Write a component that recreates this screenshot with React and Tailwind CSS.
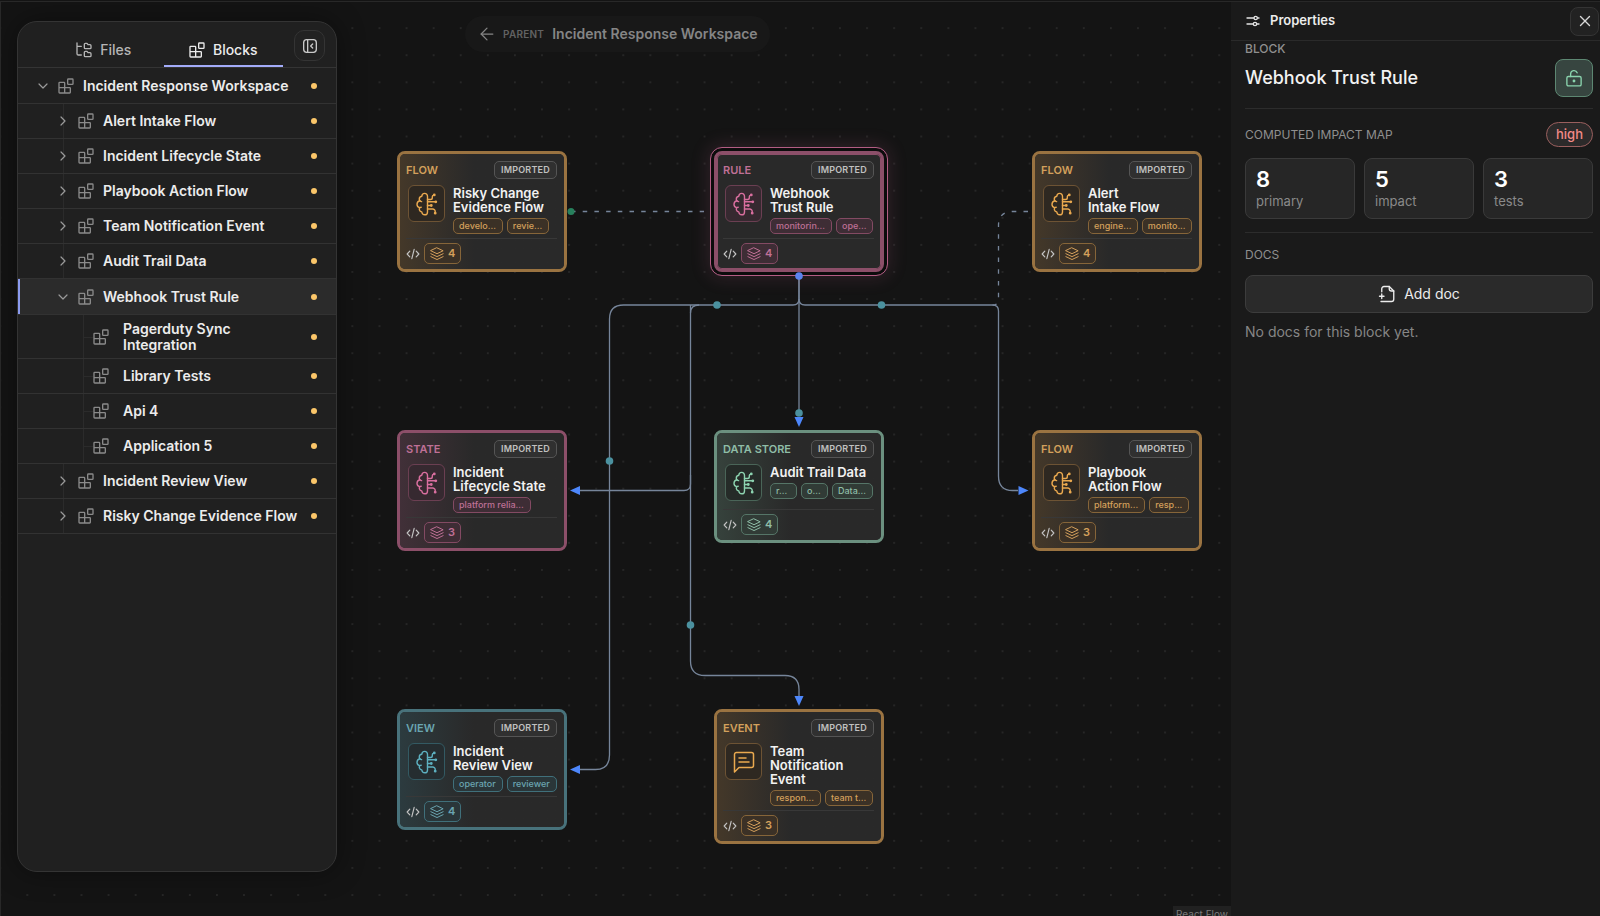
import React, { useState } from 'react';
import { ArrowLeft, ChevronDown, ChevronRight, X } from 'lucide-react';

const TONES = {
    amber: {
        frame: 'border-[#9a7341]',
        tint: 'from-[#443829]',
        label: 'text-[#d3a05c]',
        icon: 'text-[#eaa94f]',
        box: 'border-[#6d5334] bg-[#2e2821]',
        chip: 'border-[#866539] bg-[#3b3126] text-[#d3a05c]',
    },
    rose: {
        frame: 'border-[#8c4f69]',
        tint: 'from-[#413038]',
        label: 'text-[#bf7096]',
        icon: 'text-[#d96f9f]',
        box: 'border-[#6b3f52] bg-[#362930]',
        chip: 'border-[#834a63] bg-[#3e2d35] text-[#bf7096]',
    },
    green: {
        frame: 'border-[#6b907f]',
        tint: 'from-[#36423c]',
        label: 'text-[#8fbda7]',
        icon: 'text-[#8dd3b0]',
        box: 'border-[#4a6558] bg-[#252b28]',
        chip: 'border-[#557567] bg-[#313b36] text-[#8fbda7]',
    },
    teal: {
        frame: 'border-[#48727b]',
        tint: 'from-[#2c3b3f]',
        label: 'text-[#6aa5b1]',
        icon: 'text-[#5db0c0]',
        box: 'border-[#335a63] bg-[#252d30]',
        chip: 'border-[#40707b] bg-[#2a3639] text-[#6aa5b1]',
    },
};

const NODES = [
    { id: 'risky', kind: 'FLOW', tone: 'amber', title: ['Risky Change', 'Evidence Flow'], tags: ['develo...', 'revie...'], count: 4, pos: 'left-[397px] top-[151px]' },
    { id: 'webhook', kind: 'RULE', tone: 'rose', title: ['Webhook', 'Trust Rule'], tags: ['monitorin...', 'ope...'], count: 4, pos: 'left-[714px] top-[151px]', selected: true },
    { id: 'alert', kind: 'FLOW', tone: 'amber', title: ['Alert', 'Intake Flow'], tags: ['engine...', 'monito...'], count: 4, pos: 'left-[1032px] top-[151px]' },
    { id: 'lifecycle', kind: 'STATE', tone: 'rose', title: ['Incident', 'Lifecycle State'], tags: ['platform relia...'], count: 3, pos: 'left-[397px] top-[430px]' },
    { id: 'audit', kind: 'DATA STORE', tone: 'green', title: ['Audit Trail Data'], tags: ['r...', 'o...', 'Data...'], count: 4, pos: 'left-[714px] top-[430px]' },
    { id: 'playbook', kind: 'FLOW', tone: 'amber', title: ['Playbook', 'Action Flow'], tags: ['platform...', 'resp...'], count: 3, pos: 'left-[1032px] top-[430px]' },
    { id: 'review', kind: 'VIEW', tone: 'teal', title: ['Incident', 'Review View'], tags: ['operator', 'reviewer'], count: 4, pos: 'left-[397px] top-[709px]' },
    { id: 'notify', kind: 'EVENT', tone: 'amber', title: ['Team', 'Notification', 'Event'], tags: ['respon...', 'team t...'], count: 3, pos: 'left-[714px] top-[709px]', message: true },
];

const TREE = [
    { name: 'Incident Response Workspace', depth: 0, open: true },
    { name: 'Alert Intake Flow', depth: 1 },
    { name: 'Incident Lifecycle State', depth: 1 },
    { name: 'Playbook Action Flow', depth: 1 },
    { name: 'Team Notification Event', depth: 1 },
    { name: 'Audit Trail Data', depth: 1 },
    { name: 'Webhook Trust Rule', depth: 1, open: true },
    { name: 'Pagerduty Sync Integration', depth: 2, tall: true },
    { name: 'Library Tests', depth: 2 },
    { name: 'Api 4', depth: 2 },
    { name: 'Application 5', depth: 2 },
    { name: 'Incident Review View', depth: 1 },
    { name: 'Risky Change Evidence Flow', depth: 1 },
];

const STATS = [
    { value: 8, label: 'primary' },
    { value: 5, label: 'impact' },
    { value: 3, label: 'tests' },
];

function Svg({ className, stroke = 1.5, children }) {
    return (
        <svg viewBox="0 0 24 24" fill="none" stroke="currentColor" strokeWidth={stroke} strokeLinecap="round" strokeLinejoin="round" className={className} aria-hidden="true">
            {children}
        </svg>
    );
}

const BlocksIcon = ({ className }) => (
    <Svg className={className} stroke={2}>
        <path d="M10 22.500V7.500a1 1 0 0 0-1-1H2.500a1 1 0 0 0-1 1v14a1 1 0 0 0 1 1h15a1 1 0 0 0 1-1v-6a1 1 0 0 0-1-1h-16" />
        <rect x="14.500" y="1.500" width="8" height="8" rx="1" />
    </Svg>
);

const TreeIcon = ({ className }) => (
    <Svg className={className} stroke={2}>
        <path d="M1.500 1.500v16a2 2 0 0 0 2 2h4.500M1.500 6.500H8" />
        <path d="M12.500 3.500v5a1.500 1.500 0 0 0 1.500 1.500h7a1.500 1.500 0 0 0 1.500-1.500V5.500A1.500 1.500 0 0 0 21 4h-3l-1.500-2H14a1.500 1.500 0 0 0-1.500 1.500Z" />
        <path d="M12.500 15.500v5A1.500 1.500 0 0 0 14 22h7a1.500 1.500 0 0 0 1.500-1.500v-3A1.500 1.500 0 0 0 21 16h-3l-1.500-2H14a1.500 1.500 0 0 0-1.500 1.500Z" />
    </Svg>
);

const BrainIcon = () => (
    <Svg className="size-6" stroke={1.4}>
        <path d="M12.500 4.500C12.500 2.600 11.300 1.400 9.700 1.400 8 1.400 6.900 2.600 6.800 4.300 5.100 4.500 4.200 5.700 4.300 7.300c.1.600.3 1 .6 1.400C3.100 9.100 2 10.400 2 12.200c0 1.700 1 3 2.600 3.500-.3.700-.4 1.400-.2 2.200.3 1.300 1.200 2 2.400 2.100.2 1.700 1.400 2.800 3 2.800 1.500 0 2.700-1.200 2.700-2.900Z" />
        <path d="M4.900 8.700c.5.500 1 .8 1.700.9M4.600 15.700c.5-.3 1-.4 1.600-.4" />
        <path d="M12.500 7.500h3a1.800 1.800 0 0 0 1.800-1.800v-.9a1.600 1.600 0 0 1 1.400-1.600M12.500 9.800h7.500M12.500 13.500h3M12.500 17h5.200a2.500 2.500 0 0 1 2.500 2.500v1" />
        <g fill="currentColor">
            <circle cx="19.300" cy="2.900" r="0.700" />
            <circle cx="20.800" cy="9.800" r="0.700" />
            <circle cx="16.300" cy="13.500" r="0.700" />
            <circle cx="20.200" cy="21.200" r="0.700" />
        </g>
    </Svg>
);

const MessageIcon = () => (
    <Svg className="size-6">
        <path d="M2.500 22V4.500a2 2 0 0 1 2-2h15a2 2 0 0 1 2 2v11a2 2 0 0 1-2 2H7Z" />
        <path d="M7 8h7M7 12h10" />
    </Svg>
);

const LayersIcon = () => (
    <Svg className="size-3.5" stroke={1.7}>
        <path d="M12 1.500 22.500 6.500 12 11.500 1.500 6.500Z" />
        <path d="m1.500 11.500 10.500 5 10.500-5" />
        <path d="m1.500 16.500 10.500 5 10.500-5" />
    </Svg>
);

const CodeIcon = () => (
    <Svg className="size-3.5 text-[#c4c4c4]" stroke={2}>
        <path d="M6.500 7 2 12l4.500 5M17.500 7l4.500 5-4.500 5M14 4l-4 16" />
    </Svg>
);

function BlockNode({ node }) {
    const tone = TONES[node.tone];
    return (
        <article className={`absolute w-[170px] rounded-lg border-3 bg-[#292929] ${tone.frame} ${node.pos} ${node.selected ? 'outline outline-offset-3 outline-[#b35d84] shadow-[inset_0_0_0_1px_#8c4f69,0_0_0_3px_#0c0c0c,0_0_18px_6px_rgba(179,93,132,0.18)]' : ''}`}>
            <div className={`rounded-[5px] pt-[7px] pr-[7px] pb-[5px] pl-1.5 ${node.selected ? '' : `bg-linear-to-r ${tone.tint} to-[#292929] to-45%`}`}>
                <header className="flex h-[18px] items-center justify-between">
                    <span className={`text-[11px] font-semibold ${tone.label}`}>{node.kind}</span>
                    <span className="flex h-[18px] items-center rounded-[5px] border border-[#555] bg-[#303030] px-1.5 text-[9px] font-semibold tracking-wide text-[#c0c0c0]">IMPORTED</span>
                </header>
                <div className="mt-1.5 flex min-h-[41px] gap-2 pl-0.5">
                    <div className={`flex size-[37px] shrink-0 items-center justify-center rounded-md border ${tone.box} ${tone.icon}`}>
                        {node.message ? <MessageIcon /> : <BrainIcon />}
                    </div>
                    <div className="min-w-0">
                        <h3 className="mt-px whitespace-nowrap text-[13px] leading-[14px] font-semibold text-[#f2f2f2]">
                            {node.title.map((line) => <span key={line} className="block">{line}</span>)}
                        </h3>
                        <div className="mt-1 flex gap-1">
                            {node.tags.map((tag) => (
                                <span key={tag} className={`flex h-4 min-w-[27px] items-center whitespace-nowrap rounded-[5px] border pr-1.5 pl-[5px] text-[9px] font-medium ${tone.chip}`}>{tag}</span>
                            ))}
                        </div>
                    </div>
                </div>
                <footer className="mt-1 flex items-center gap-1 border-t border-[#383838] pt-1">
                    <CodeIcon />
                    <span className={`flex h-[21px] items-center gap-1 rounded-[5px] border px-[5px] text-[11px] font-semibold ${tone.chip}`}>
                        <LayersIcon />
                        {node.count}
                    </span>
                </footer>
            </div>
        </article>
    );
}

function Edges() {
    return (
        <svg className="absolute inset-0 size-full" aria-hidden="true">
            <defs>
                <pattern id="dots" x="-13.300" y="14.600" width="27.090" height="27.090" patternUnits="userSpaceOnUse">
                    <circle cx="13.500" cy="13.500" r="0.750" fill="#3e3e3e" />
                </pattern>
            </defs>
            <rect width="100%" height="100%" fill="url(#dots)" />
            <g fill="none" stroke="#76859a" strokeWidth="1.300">
                <path d="M799 276V416" />
                <path d="M799 276V299Q799 305 793 305H623.500Q609.500 305 609.500 319V755Q609.500 769.500 595.500 769.500H580" />
                <path d="M799 299Q799 305 805 305H992.500Q998.500 305 998.500 311V476Q998.500 490.500 1012.500 490.500H1018" />
                <path d="M699 305Q690.500 305 690.500 313V661Q690.500 675.500 705 675.500H785Q799 675.500 799 689.500V697" />
                <path d="M690.500 305V313" />
                <path d="M690.500 475V484Q690.500 490.500 684 490.500H580" />
                <path d="M571 211.500H704" strokeDasharray="4.500 7.200" />
                <path d="M1028 211.500H1012.500Q998.500 211.500 998.500 225.500V299Q998.500 305 992.500 305" strokeDasharray="4.500 7.200" />
            </g>
            <g fill="#4d87fb">
                <path d="M570 490.500 580 486v9Z" />
                <path d="M570 769.500 580 765v9Z" />
                <path d="M1028.500 490.500 1018.500 486v9Z" />
                <path d="M799 427 794.500 417h9Z" />
                <path d="M799 706 794.500 696h9Z" />
            </g>
            <g fill="#4b919f">
                <circle cx="717" cy="305" r="3.800" />
                <circle cx="881.500" cy="305" r="3.800" />
                <circle cx="799" cy="413" r="3.800" />
                <circle cx="609.500" cy="461" r="3.800" />
                <circle cx="690.500" cy="625" r="3.800" />
            </g>
            <circle cx="571" cy="211.500" r="3.500" fill="#27805c" />
        </svg>
    );
}

function TreeRow({ row }) {
    const selected = row.name === 'Webhook Trust Rule';
    const Chevron = row.open ? ChevronDown : ChevronRight;
    return (
        <li className={`relative flex items-center border-b border-[#323232] pr-[19px] ${row.tall ? 'h-11' : row.open ? 'h-9' : 'h-[35px]'} ${row.depth === 0 ? 'pl-[17px]' : row.depth === 1 ? 'pl-[37px]' : 'pl-[75px]'} ${selected ? 'bg-[#2b2b2b]' : ''}`}>
            {selected && <span className="absolute inset-y-0 left-0 w-0.5 bg-[#8b9bf0]" />}
            {row.depth === 1 && <span className="absolute inset-y-0 left-[45px] w-px bg-[#2b2b2b]" />}
            {row.depth === 2 && (
                <>
                    <span className="absolute inset-y-0 left-[65px] w-px bg-[#2b2b2b]" />
                    <span className="absolute top-1/2 left-[65px] h-px w-2.5 bg-[#2b2b2b]" />
                </>
            )}
            {row.depth < 2 && (
                <button type="button" aria-label={`Toggle ${row.name}`} className="relative mr-[7px] text-[#9a9a9a]">
                    <Chevron className="size-4" strokeWidth={1.8} />
                </button>
            )}
            <BlocksIcon className="size-4 shrink-0 text-[#8a8a8a]" />
            <span className={`flex-1 text-sm leading-4 font-semibold text-[#ececec] ${row.depth === 2 ? 'ml-[14px] pr-16' : 'ml-[9px] whitespace-nowrap'}`}>{row.name}</span>
            <span className="size-1.5 shrink-0 rounded-full bg-[#fbc669]" />
        </li>
    );
}

function Sidebar() {
    const [tab, setTab] = useState('blocks');
    const tabs = [
        { id: 'files', label: 'Files', Icon: TreeIcon },
        { id: 'blocks', label: 'Blocks', Icon: BlocksIcon },
    ];
    return (
        <aside className="relative mt-[19px] mb-11 ml-4 flex w-80 flex-col overflow-hidden rounded-[20px] border border-[#343434] bg-[#202020] shadow-[0_0_28px_rgba(0,0,0,0.4)]">
            <div className="flex h-[46px] shrink-0 items-end border-b border-[#343434] pr-[11px] pl-[26px]">
                <div role="tablist" className="grid h-full flex-1 grid-cols-2">
                    {tabs.map(({ id, label, Icon }) => (
                        <button
                            key={id}
                            type="button"
                            role="tab"
                            aria-selected={tab === id}
                            onClick={() => setTab(id)}
                            className={`flex items-center justify-center gap-2 border-b-2 pt-3 text-sm font-medium ${tab === id ? 'border-[#a3acfa] text-[#ececec]' : 'border-transparent text-[#b5b5b5]'}`}
                        >
                            <Icon className="size-4" />
                            {label}
                        </button>
                    ))}
                </div>
                <button type="button" aria-label="Collapse sidebar" className="mb-1.5 ml-[11px] flex size-[31px] items-center justify-center rounded-[10px] border border-[#343434] bg-[#222] text-[#c8c8c8]">
                    <Svg className="size-4" stroke={2}>
                        <rect x="2.500" y="2.500" width="19" height="19" rx="4.500" />
                        <path d="M8.500 3v18M16 9l-3 3 3 3" />
                    </Svg>
                </button>
            </div>
            <ul>
                {TREE.map((row) => <TreeRow key={row.name} row={row} />)}
            </ul>
        </aside>
    );
}

function Properties() {
    return (
        <aside className="relative flex w-[369px] shrink-0 flex-col bg-[#1a1a1a]">
            <header className="flex h-[39px] items-center border-b border-[#2a2a2a] pr-px pl-3.5">
                <Svg className="size-4 text-[#e4e4e4]" stroke={2}>
                    <path d="M3 7.500h10M19 7.500h2M3 16.500h9M18 16.500h3" />
                    <circle cx="16" cy="7.500" r="2.500" />
                    <circle cx="15" cy="16.500" r="2.500" />
                </Svg>
                <h2 className="ml-[9px] flex-1 text-[13px] font-semibold text-[#ececec]">Properties</h2>
                <button type="button" aria-label="Close" className="flex size-[29px] items-center justify-center rounded-lg border border-[#343434] bg-[#222] text-[#d8d8d8]">
                    <X className="size-[18px]" strokeWidth={1.8} />
                </button>
            </header>
            <div className="pr-[7px] pl-3.5">
                <section className="border-b border-[#2c2c2c] pb-[11px]">
                    <p className="text-xs leading-4 font-medium text-[#8f8f8f]">BLOCK</p>
                    <div className="mt-0.5 flex items-center justify-between">
                        <h1 className="text-lg font-medium text-[#f2f2f2]">Webhook Trust Rule</h1>
                        <button type="button" aria-label="Unlocked" className="flex size-[38px] items-center justify-center rounded-lg border border-[#5d8772] bg-[#374540] text-[#8ad3ad]">
                            <Svg className="size-[18px]" stroke={1.8}>
                                <rect x="2.500" y="10" width="19" height="12.500" rx="2" />
                                <path d="M7.500 10V6.500a4.500 4.500 0 0 1 8.700-1.500" />
                                <circle cx="12" cy="16" r="1" fill="currentColor" />
                            </Svg>
                        </button>
                    </div>
                </section>
                <section className="border-b border-[#2c2c2c] py-[13px]">
                    <div className="flex h-[25px] items-center justify-between">
                        <h2 className="text-xs text-[#8f8f8f]">COMPUTED IMPACT MAP</h2>
                        <span className="flex h-[25px] items-center rounded-full border border-[#9a5f5e] bg-[#2c2a2a] px-[9px] text-[13px] font-medium text-[#f38b87]">high</span>
                    </div>
                    <div className="mt-[11px] grid grid-cols-3 gap-[9px]">
                        {STATS.map((s) => (
                            <div key={s.label} className="h-[61px] rounded-lg border border-[#3a3a3a] bg-[#262626] px-2.5 pt-2">
                                <div className="text-[22px] leading-6 font-semibold text-white">{s.value}</div>
                                <div className="text-[13px] leading-5 text-[#8a8a8a]">{s.label}</div>
                            </div>
                        ))}
                    </div>
                </section>
                <section className="pt-3.5">
                    <h2 className="text-xs leading-4 text-[#8f8f8f]">DOCS</h2>
                    <button type="button" className="mt-3 flex h-[38px] w-full items-center justify-center gap-2 rounded-lg border border-[#3c3c3c] bg-[#2a2a2a] text-sm text-[#ececec]">
                        <Svg className="size-[18px]" stroke={1.8}>
                            <path d="M5 9V5a3 3 0 0 1 3-3h7l6 6v11a3 3 0 0 1-3 3H4" />
                            <path d="M15 2v3a3 3 0 0 0 3 3h3M5 12v6M2 15h6" />
                        </Svg>
                        Add doc
                    </button>
                    <p className="mt-[9px] text-sm text-[#868686]">No docs for this block yet.</p>
                </section>
            </div>
        </aside>
    );
}

export default function App() {
    return (
        <div className="h-screen bg-[#141414] pt-px font-['Inter',sans-serif] antialiased">
            <div className="flex h-full overflow-hidden border-t border-l border-[#282828]">
                <main className="relative flex min-w-0 flex-1 overflow-hidden">
                    {/* The free canvas: grid, connectors and block nodes */}
                    <div className="absolute -top-0.5 -left-px h-[calc(100%+2px)] w-[1232px]">
                        <Edges />
                        {NODES.map((node) => <BlockNode key={node.id} node={node} />)}
                        <svg className="absolute top-[271px] left-[794px] size-2.5" aria-hidden="true">
                            <circle cx="5" cy="5" r="3.800" fill="#5b83ef" />
                        </svg>
                    </div>
                    <Sidebar />
                    <button type="button" className="absolute top-3.5 left-[464px] flex h-9 items-center rounded-full bg-[#181818] px-3 text-[#858585]">
                        <ArrowLeft className="size-5" strokeWidth={1.5} />
                        <span className="ml-1.5 text-[10px] font-semibold tracking-wide text-[#626262]">PARENT</span>
                        <span className="ml-2 text-sm font-semibold">Incident Response Workspace</span>
                    </button>
                    <a href="#attribution" className="absolute right-0 -bottom-1.5 bg-[#212121] px-[3px] text-[10px] leading-4 text-[#7a7a7a]">React Flow</a>
                </main>
                <Properties />
            </div>
        </div>
    );
}
